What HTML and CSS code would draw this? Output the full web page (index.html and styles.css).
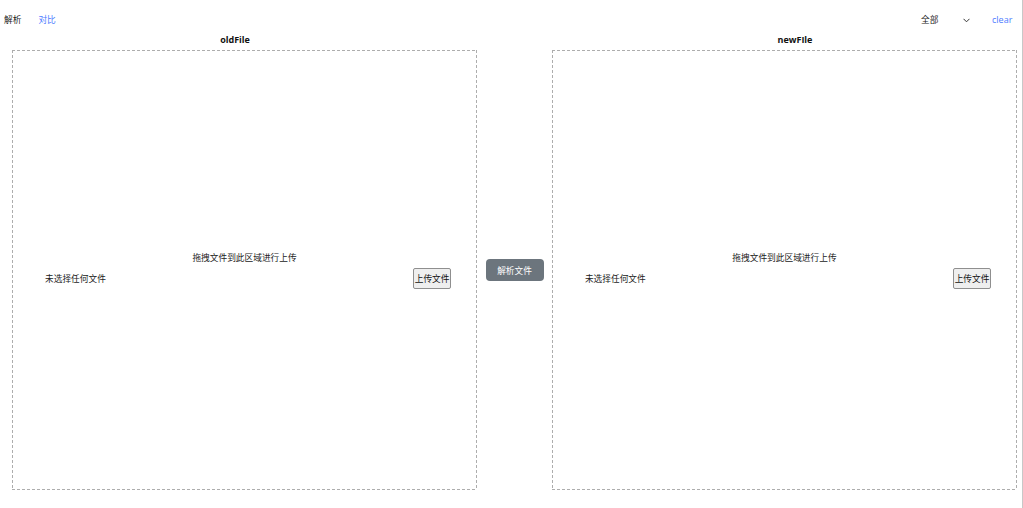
FILE: index.html
```html
<!DOCTYPE html>
<html lang="zh-CN">
<head>
<meta charset="utf-8">
<title>文件对比</title>
<link rel="stylesheet" href="styles.css">
</head>
<body>
<div class="page">
  <header class="topbar">
    <nav class="tabs">
      <span class="tab">解析</span>
      <span class="tab tab-link">对比</span>
    </nav>
    <div class="tools">
      <div class="select">
        <span class="select-value">全部</span>
        <svg class="chev" width="7" height="5" viewBox="0 0 7 5"><path d="M0.5 0.8 L3.5 3.8 L6.5 0.8" fill="none" stroke="#333" stroke-width="1"/></svg>
      </div>
      <span class="clear">clear</span>
    </div>
  </header>
  <main class="workspace">
    <section class="column column-old">
      <h2 class="title title-old">oldFile</h2>
      <div class="dropzone">
        <p class="drop-hint">拖拽文件到此区域进行上传</p>
        <div class="file-row">
          <span class="file-name">未选择任何文件</span>
          <button class="file-btn">上传文件</button>
        </div>
      </div>
    </section>
    <div class="middle">
      <button class="parse-btn">解析文件</button>
    </div>
    <section class="column column-new">
      <h2 class="title title-new">newFIle</h2>
      <div class="dropzone">
        <p class="drop-hint">拖拽文件到此区域进行上传</p>
        <div class="file-row">
          <span class="file-name">未选择任何文件</span>
          <button class="file-btn">上传文件</button>
        </div>
      </div>
    </section>
  </main>
</div>
</body>
</html>
```
FILE: styles.css
```css
* { box-sizing: border-box; }
html, body { margin: 0; padding: 0; background: #fff; }
body {
  font-family: "Noto Sans CJK SC", "Noto Sans", sans-serif;
  font-size: 8.7px;
  color: #222;
}
.page {
  width: 1023px;
  height: 508px;
  border-right: 1px solid #c8c8c8;
  overflow: hidden;
}
.topbar {
  display: flex;
  justify-content: space-between;
  align-items: center;
  height: 32px;
  padding: 7px 0 0 4px;
}
.tabs { display: flex; gap: 17px; }
.tab { line-height: 12px; }
.tab-link { color: #4d7cff; }
.tools { display: flex; align-items: center; }
.select { display: flex; align-items: center; width: 71px; }
.select-value { width: 42px; }
.chev { display: block; margin-top: 1px; }
.clear {
  font-family: "Open Sans", "Noto Sans", sans-serif;
  color: #4d7cff;
  font-size: 9px;
  width: 30px;
}
.workspace {
  display: flex;
  padding: 0 5px 0 12px;
}
.column { width: 466px; display: flex; flex-direction: column; }
.title {
  margin: 0;
  height: 18px;
  line-height: 16px;
  font-family: "Open Sans", "Noto Sans", sans-serif;
  font-size: 9px;
  font-weight: 700;
  text-align: center;
  color: #111;
}
.title-old { padding-right: 19px; }
.title-new { padding-left: 21px; }
.dropzone {
  height: 440px;
  background:
    repeating-linear-gradient(90deg, #adadad 0 3px, transparent 3px 5px) top left / 100% 1px no-repeat,
    repeating-linear-gradient(90deg, #adadad 0 3px, transparent 3px 5px) bottom left / 100% 1px no-repeat,
    repeating-linear-gradient(180deg, #adadad 0 3px, transparent 3px 5px) top left / 1px 100% no-repeat,
    repeating-linear-gradient(180deg, #adadad 0 3px, transparent 3px 5px) top right / 1px 100% no-repeat;
  display: flex;
  flex-direction: column;
  justify-content: center;
  padding-top: 1px;
}
.drop-hint {
  margin: 0 0 4px;
  text-align: center;
  line-height: 12px;
}
.file-row {
  display: flex;
  justify-content: space-between;
  align-items: center;
  padding: 0 26px 0 33px;
}
.file-name { line-height: 12px; }
.file-btn {
  font-family: "Noto Sans CJK SC", sans-serif;
  font-size: 8.7px;
  height: 21px;
  width: 38px;
  padding: 0;
  border: 1px solid #8f8f8f;
  border-radius: 2px;
  background: #efefef;
  color: #111;
}
.middle {
  width: 75px;
  display: flex;
  align-items: center;
  justify-content: center;
  padding-top: 18px;
}
.parse-btn {
  font-family: "Noto Sans CJK SC", sans-serif;
  font-size: 8.7px;
  width: 58px;
  height: 22px;
  border: none;
  border-radius: 4px;
  background: #6c757d;
  color: #fff;
  padding: 0;
}
```
